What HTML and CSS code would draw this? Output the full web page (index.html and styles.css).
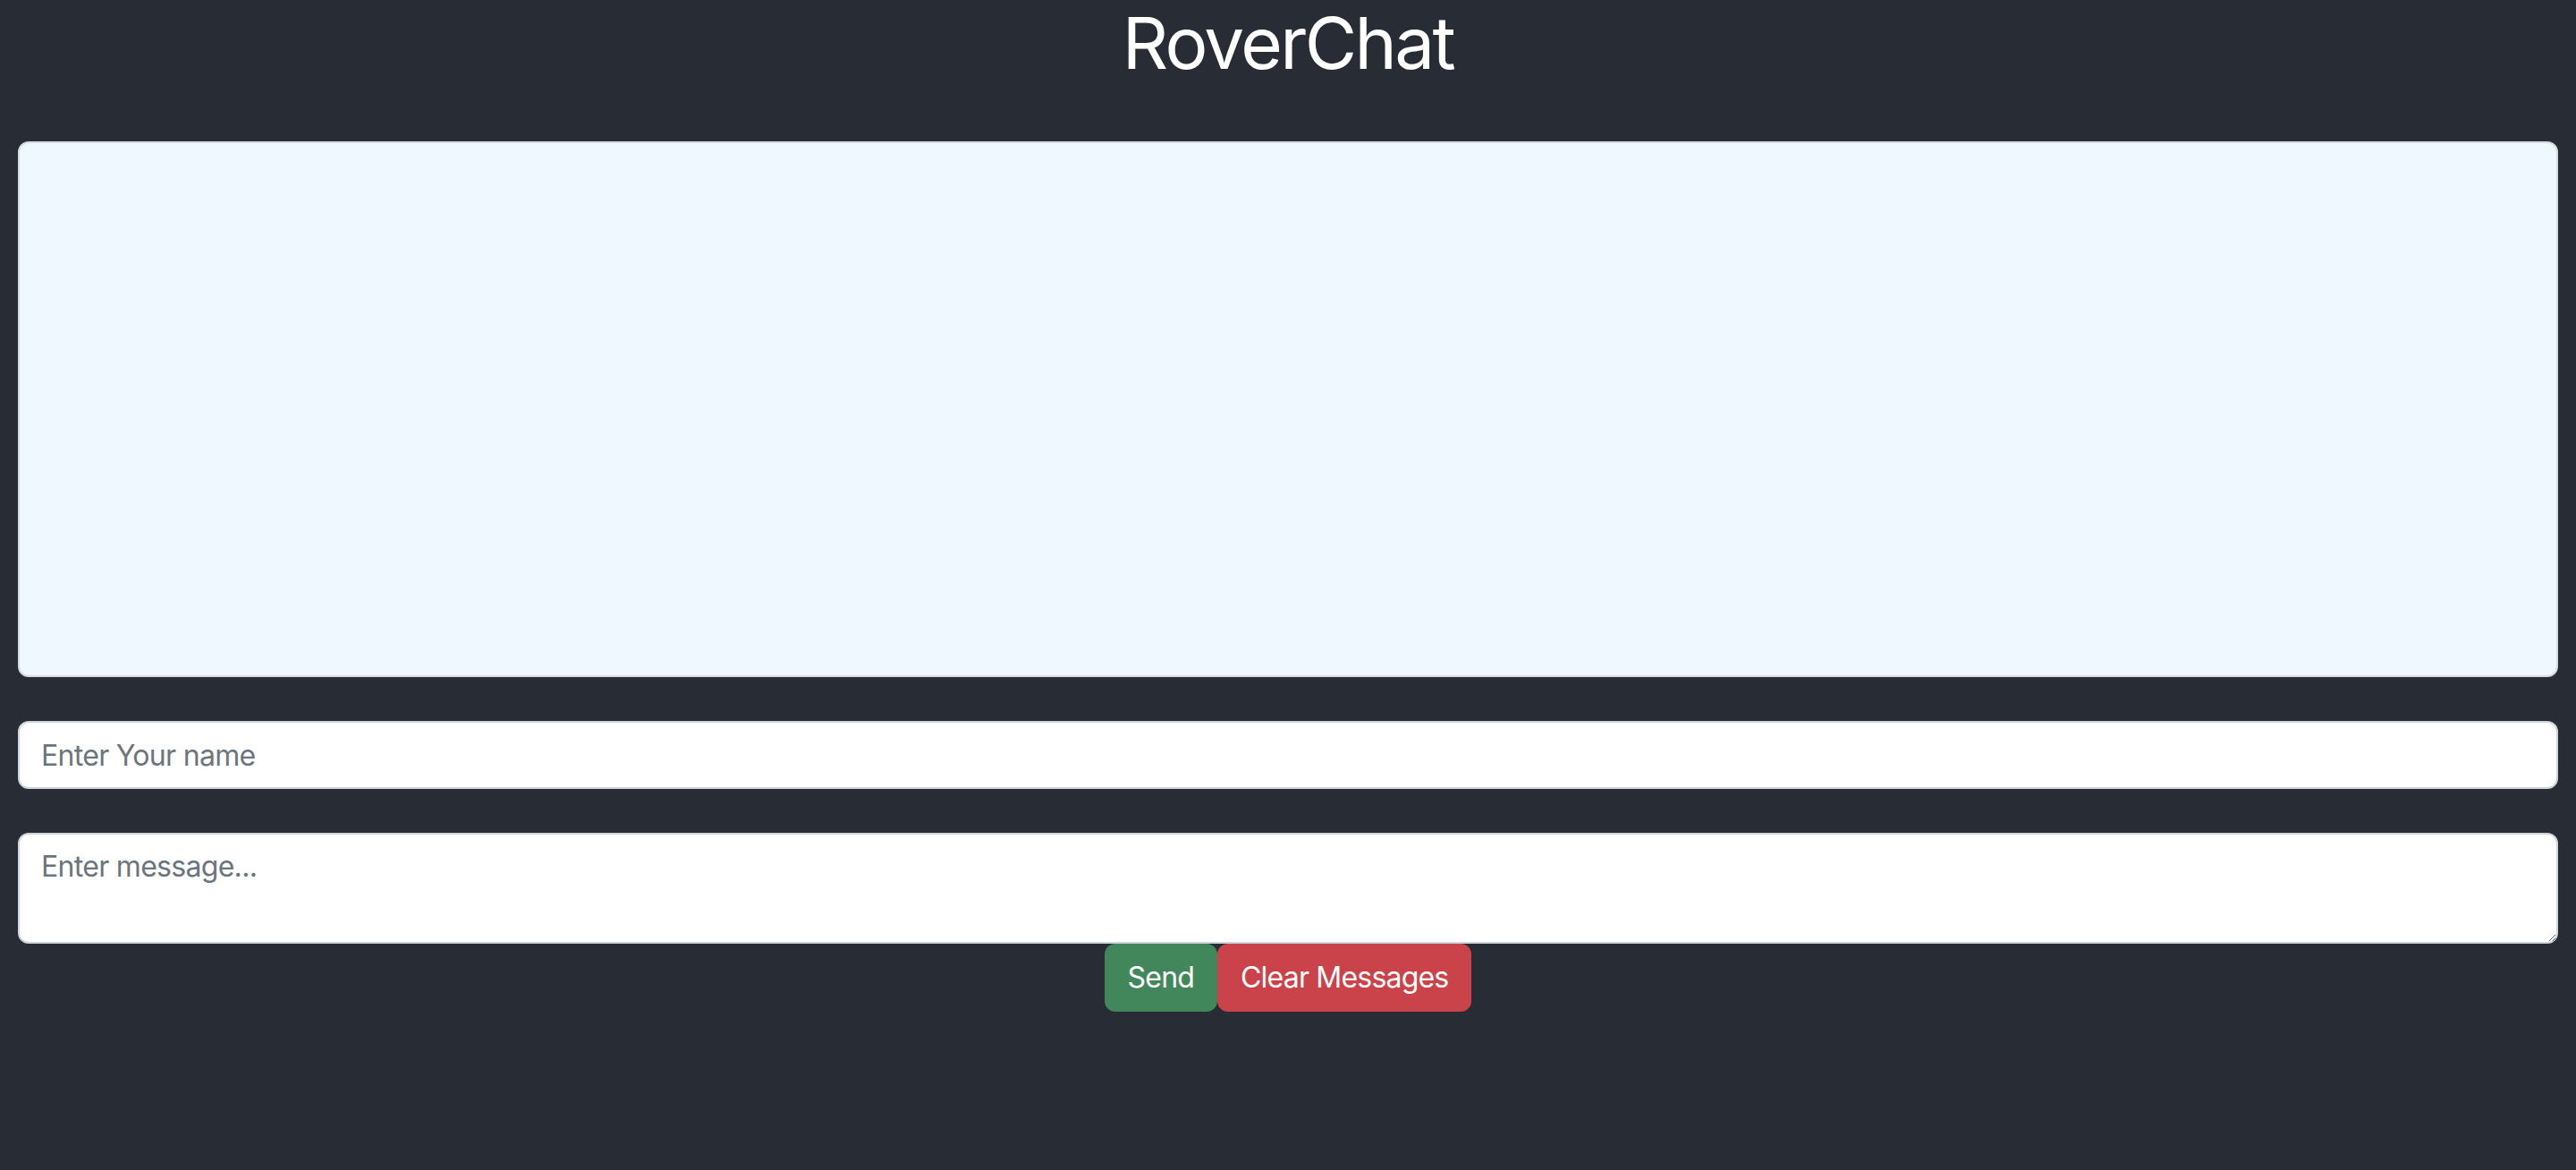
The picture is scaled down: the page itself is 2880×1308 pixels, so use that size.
FILE: index.html
```html
<!DOCTYPE html>
<html lang="en">
<head>
<meta charset="utf-8">
<title>RoverChat</title>
<link rel="stylesheet" href="styles.css">
</head>
<body>
<div class="app">
  <h1 class="title">RoverChat</h1>
  <div class="messages"></div>
  <input class="field name-field" type="text" placeholder="Enter Your name">
  <textarea class="field message-field" rows="2" placeholder="Enter message..."></textarea>
  <div class="actions">
    <button class="btn btn-send">Send</button>
    <button class="btn btn-clear">Clear Messages</button>
  </div>
</div>
</body>
</html>
```

FILE: styles.css
```css
html, body {
  margin: 0;
  padding: 0;
  background: #282c34;
  min-height: 100%;
}
body {
  font-family: Inter, "Noto Sans", "Liberation Sans", sans-serif;
  color: #fff;
}
.app {
  display: flex;
  flex-direction: column;
  padding: 0 20px;
}
.title {
  margin: 0 0 62px;
  font-size: 80px;
  line-height: 96px;
  font-weight: 400;
  letter-spacing: -2.6px;
  text-align: center;
  color: #fff;
}
.messages {
  box-sizing: border-box;
  height: 599px;
  background: #f0f8ff;
  border: 2px solid #d3dae3;
  border-radius: 12px;
}
.field {
  box-sizing: border-box;
  display: block;
  width: 100%;
  margin: 49px 0 0;
  padding: 12px 24px;
  font-family: inherit;
  font-size: 32px;
  line-height: 48px;
  color: #212529;
  background: #fff;
  border: 2px solid #ced4da;
  border-radius: 12px;
  outline: none;
  letter-spacing: -0.7px;
}
.field::placeholder {
  color: #6c757d;
  opacity: 1;
}
.name-field {
  height: 76px;
}
.message-field {
  height: 124px;
  resize: vertical;
}
.actions {
  display: flex;
  justify-content: center;
}
.btn {
  box-sizing: border-box;
  height: 76px;
  padding: 12px 24px;
  font-family: inherit;
  font-size: 32px;
  line-height: 48px;
  color: #fff;
  border: 2px solid transparent;
  border-radius: 12px;
  cursor: pointer;
  letter-spacing: -0.8px;
}
.btn-send {
  background: #42875b;
  border-color: #42875b;
}
.btn-clear {
  background: #cb434a;
  border-color: #cb434a;
}
```
